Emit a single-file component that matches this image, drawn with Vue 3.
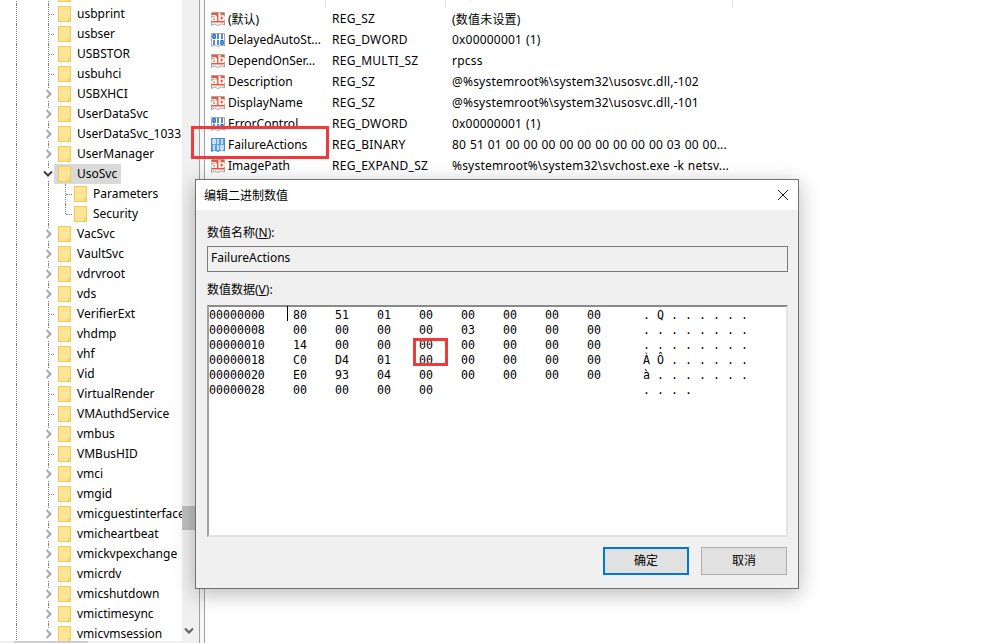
<script setup>
const treeRows = [
  { name: '', kind: 'leaf' },
  { name: 'usbprint', kind: 'leaf' },
  { name: 'usbser', kind: 'leaf' },
  { name: 'USBSTOR', kind: 'leaf' },
  { name: 'usbuhci', kind: 'leaf' },
  { name: 'USBXHCI', kind: 'closed' },
  { name: 'UserDataSvc', kind: 'closed' },
  { name: 'UserDataSvc_1033', kind: 'closed' },
  { name: 'UserManager', kind: 'closed' },
  { name: 'UsoSvc', kind: 'open' },
  { name: 'Parameters', kind: 'child' },
  { name: 'Security', kind: 'lastchild' },
  { name: 'VacSvc', kind: 'closed' },
  { name: 'VaultSvc', kind: 'closed' },
  { name: 'vdrvroot', kind: 'closed' },
  { name: 'vds', kind: 'closed' },
  { name: 'VerifierExt', kind: 'leaf' },
  { name: 'vhdmp', kind: 'closed' },
  { name: 'vhf', kind: 'leaf' },
  { name: 'Vid', kind: 'closed' },
  { name: 'VirtualRender', kind: 'leaf' },
  { name: 'VMAuthdService', kind: 'leaf' },
  { name: 'vmbus', kind: 'closed' },
  { name: 'VMBusHID', kind: 'leaf' },
  { name: 'vmci', kind: 'closed' },
  { name: 'vmgid', kind: 'leaf' },
  { name: 'vmicguestinterface', kind: 'closed' },
  { name: 'vmicheartbeat', kind: 'closed' },
  { name: 'vmickvpexchange', kind: 'closed' },
  { name: 'vmicrdv', kind: 'closed' },
  { name: 'vmicshutdown', kind: 'closed' },
  { name: 'vmictimesync', kind: 'closed' },
  { name: 'vmicvmsession', kind: 'closed' },
]

const values = [
  { icon: 'ab', name: '(默认)', type: 'REG_SZ', data: '(数值未设置)' },
  { icon: 'bin', name: 'DelayedAutoSt...', type: 'REG_DWORD', data: '0x00000001 (1)' },
  { icon: 'ab', name: 'DependOnSer...', type: 'REG_MULTI_SZ', data: 'rpcss' },
  { icon: 'ab', name: 'Description', type: 'REG_SZ', data: '@%systemroot%\\system32\\usosvc.dll,-102' },
  { icon: 'ab', name: 'DisplayName', type: 'REG_SZ', data: '@%systemroot%\\system32\\usosvc.dll,-101' },
  { icon: 'bin', name: 'ErrorControl', type: 'REG_DWORD', data: '0x00000001 (1)' },
  { icon: 'bin', name: 'FailureActions', type: 'REG_BINARY', data: '80 51 01 00 00 00 00 00 00 00 00 00 03 00 00...', selected: true },
  { icon: 'ab', name: 'ImagePath', type: 'REG_EXPAND_SZ', data: '%systemroot%\\system32\\svchost.exe -k netsv...' },
]

const hexRows = [
  { off: '00000000', bytes: ['80', '51', '01', '00', '00', '00', '00', '00'], ascii: ['.', 'Q', '.', '.', '.', '.', '.', '.'] },
  { off: '00000008', bytes: ['00', '00', '00', '00', '03', '00', '00', '00'], ascii: ['.', '.', '.', '.', '.', '.', '.', '.'] },
  { off: '00000010', bytes: ['14', '00', '00', '00', '00', '00', '00', '00'], ascii: ['.', '.', '.', '.', '.', '.', '.', '.'] },
  { off: '00000018', bytes: ['C0', 'D4', '01', '00', '00', '00', '00', '00'], ascii: ['À', 'Ô', '.', '.', '.', '.', '.', '.'] },
  { off: '00000020', bytes: ['E0', '93', '04', '00', '00', '00', '00', '00'], ascii: ['à', '.', '.', '.', '.', '.', '.', '.'] },
  { off: '00000028', bytes: ['00', '00', '00', '00', '', '', '', ''], ascii: ['.', '.', '.', '.', '', '', '', ''] },
]
</script>

<template>
  <div class="screen">
    <div class="tree">
      <div class="tree-rows">
        <div v-for="(row, i) in treeRows" :key="i" class="tree-row">
          <span class="guide-a"></span>
          <span class="guide-b"></span>
          <template v-if="row.kind === 'child' || row.kind === 'lastchild'">
            <span class="guide-c" :class="{ half: row.kind === 'lastchild' }"></span>
            <span class="stub child-stub"></span>
          </template>
          <span v-else class="stub" :class="{ hidden: row.kind !== 'leaf' }"></span>
          <span v-if="row.kind === 'closed'" class="chev">
            <svg width="8" height="10" viewBox="0 0 8 10"><path d="M1.5 1 5.5 5 1.5 9" fill="none" stroke="#a8a8a8" stroke-width="2" /></svg>
          </span>
          <span v-if="row.kind === 'open'" class="chev chev-open">
            <svg width="10" height="8" viewBox="0 0 10 8"><path d="M1 1.5 5 5.5 9 1.5" fill="none" stroke="#404040" stroke-width="2" /></svg>
          </span>
          <span class="node" :class="{ selected: row.kind === 'open', childnode: row.kind === 'child' || row.kind === 'lastchild' }">
            <svg class="folder" width="13" height="16" viewBox="0 0 13 16">
              <rect x="0.5" y="0.5" width="12" height="15" fill="#fee595" stroke="#eecb57" />
              <path d="M10.5 15.5V12.5H12.5" fill="none" stroke="#eecb57" />
            </svg>
            <span class="node-label">{{ row.name }}</span>
          </span>
        </div>
      </div>
      <div class="hscroll"><span class="hthumb"></span></div>
    </div>

    <div class="vscroll">
      <span class="vthumb"></span>
      <svg class="varrow" width="10" height="8" viewBox="0 0 10 8"><path d="M1 1.5 5 5.5 9 1.5" fill="none" stroke="#606060" stroke-width="2" /></svg>
    </div>
    <div class="splitter"></div>

    <div class="list">
      <div class="list-head">
        <span class="head-cell"><span>名称</span></span>
        <span class="head-cell"><span>类型</span></span>
        <span class="head-cell"><span>数据</span></span>
      </div>
      <div v-for="v in values" :key="v.name" class="list-row">
        <span class="cell-name">
          <svg v-if="v.icon === 'ab'" class="vicon" width="16" height="16" viewBox="0 0 16 16">
            <path d="M1.5 1.5H14.5V14L11.5 12.8 8 14.5 4.5 13 1.5 14.5Z" fill="#fff" stroke="#a5a5a5" />
            <rect x="2" y="2" width="12" height="9.5" fill="#e8583a" />
            <text x="8" y="10.2" text-anchor="middle" class="ab-text">ab</text>
          </svg>
          <svg v-else class="vicon" width="16" height="16" viewBox="0 0 16 16">
            <path d="M1.5 1.5H14.5V14L11.5 12.8 8 14.5 4.5 13 1.5 14.5Z" :fill="v.selected ? '#5aa0e6' : '#fff'" :stroke="v.selected ? '#4a8ed0' : '#a5a5a5'" />
            <g fill="none" :stroke="v.selected ? '#eaf4ff' : '#1b66c9'" stroke-width="1.5">
              <rect x="3" y="2.6" width="2.2" height="4" rx="1" />
              <path d="M8 2V7M12 2V7" />
              <path d="M4 8V13M8 8V13" />
              <rect x="10.9" y="8.4" width="2.2" height="4" rx="1" />
            </g>
          </svg>
          <span>{{ v.name }}</span>
        </span>
        <span class="cell-type">{{ v.type }}</span>
        <span class="cell-data">{{ v.data }}</span>
      </div>
      <span class="red-box name-mark"></span>
    </div>

    <div class="dialog">
      <div class="dialog-title">
        <span>编辑二进制数值</span>
        <svg width="10" height="10" viewBox="0 0 10 10"><path d="M0 0 10 10M10 0 0 10" stroke="#1a1a1a" fill="none" /></svg>
      </div>
      <div class="dialog-body">
        <div class="label first">数值名称(<u>N</u>):</div>
        <div class="name-field">FailureActions</div>
        <div class="label second">数值数据(<u>V</u>):</div>
        <div class="hex-box">
          <span class="caret"></span>
          <span class="red-box hex-mark"></span>
          <div v-for="r in hexRows" :key="r.off" class="hex-row">
            <span class="hex-off">{{ r.off }}</span>
            <span v-for="(b, i) in r.bytes" :key="i" class="hex-byte">{{ b }}</span>
            <span class="hex-gap"></span>
            <span v-for="(c, i) in r.ascii" :key="'a' + i" class="hex-char">{{ c }}</span>
          </div>
        </div>
        <div class="buttons">
          <span class="btn primary">确定</span>
          <span class="btn">取消</span>
        </div>
      </div>
    </div>
  </div>
</template>

<style>
html, body { margin: 0; background: #fff; }
</style>

<style scoped>
.screen {
  position: relative;
  display: flex;
  width: 981px;
  height: 643px;
  overflow: hidden;
  background: #fff;
  color: #000;
  font-family: "Noto Sans", "Noto Sans CJK SC", sans-serif;
  font-size: 12px;
}

/* tree */
.tree {
  position: relative;
  width: 182px;
  height: 643px;
  flex: none;
  overflow: hidden;
}
.tree-rows { margin-top: -16px; }
.tree-row {
  position: relative;
  display: flex;
  align-items: center;
  height: 20px;
  white-space: nowrap;
}
.guide-a, .guide-b, .guide-c {
  align-self: stretch;
  flex: none;
  box-sizing: border-box;
  border-right: 1px dotted #808080;
}
.guide-a { width: 17px; }
.guide-b { width: 32px; }
.guide-c { width: 17px; }
.guide-c.half { align-self: flex-start; height: 10px; }
.stub {
  flex: none;
  width: 5px;
  height: 0;
  border-top: 1px dotted #808080;
}
.stub.hidden { border-top-color: transparent; }
.child-stub { width: 6px; }
.chev {
  position: absolute;
  left: 44px;
  top: 4px;
  display: flex;
  align-items: center;
  justify-content: center;
  width: 9px;
  height: 12px;
  background: #fff;
}
.chev-open { left: 43px; width: 10px; }
.node {
  display: flex;
  align-items: center;
  height: 20px;
  padding: 0 4px;
}
.node.childnode { padding-left: 2px; }
.node.selected { background: #d9d9d9; }
.folder { flex: none; margin-right: 6px; }
.node-label { line-height: 20px; }
.hscroll {
  position: absolute;
  left: 0;
  right: 0;
  bottom: 0;
  height: 2px;
  background: #f0f0f0;
}
.hthumb {
  display: block;
  width: 74px;
  height: 2px;
  margin-left: 14px;
  background: #cdcdcd;
}
.vscroll {
  position: relative;
  flex: none;
  width: 17px;
  height: 643px;
  background: #f0f0f0;
}
.vthumb {
  position: absolute;
  left: 0;
  top: 506px;
  width: 14px;
  height: 24px;
  background: #c0c0c0;
}
.varrow { position: absolute; left: 2px; top: 627px; }
.splitter {
  flex: none;
  width: 4px;
  height: 643px;
  border-left: 1px solid #a0a0a0;
  border-right: 1px solid #a0a0a0;
  background: #f7f7f7;
}

/* list */
.list {
  position: relative;
  flex: none;
  width: 528px;
}
.list-head {
  display: grid;
  grid-template-columns: 121px 120px 287px;
  height: 8px;
  overflow: hidden;
}
.head-cell {
  display: block;
  box-sizing: border-box;
  height: 8px;
  padding-left: 6px;
  border-right: 1px solid #e5e5e5;
  color: #333;
}
.head-cell:first-child { padding-left: 23px; }
.head-cell span { display: block; margin-top: -13px; line-height: 16px; }
.list-row {
  display: grid;
  grid-template-columns: 121px 120px 287px;
  align-items: center;
  height: 21px;
  white-space: nowrap;
}
.cell-name {
  display: flex;
  align-items: center;
  padding-left: 5px;
}
.vicon { flex: none; margin-right: 2px; }
.ab-text {
  font-family: "DejaVu Sans", sans-serif;
  font-size: 10.5px;
  font-weight: 700;
  fill: #fff;
}
.cell-type { padding-left: 6px; letter-spacing: 0.25px; }
.cell-data { padding-left: 6px; letter-spacing: 0.2px; word-spacing: 0.45px; }
.red-box {
  position: absolute;
  box-sizing: border-box;
  border: 3px solid #f0393b;
  pointer-events: none;
}
.name-mark {
  left: -14px;
  top: 126px;
  width: 138px;
  height: 33px;
}

/* dialog */
.dialog {
  position: absolute;
  left: 195px;
  top: 179px;
  box-sizing: border-box;
  width: 604px;
  height: 410px;
  border: 1px solid #707070;
  background: #f0f0f0;
  box-shadow: 0 5px 20px rgba(0, 0, 0, 0.28);
  display: flex;
  flex-direction: column;
}
.dialog-title {
  display: flex;
  align-items: center;
  justify-content: space-between;
  height: 30px;
  padding: 0 10px 0 8px;
  flex: none;
  background: #fff;
}
.dialog-body {
  position: relative;
  flex: 1;
  padding: 0 10px 0 11px;
}
.label { line-height: 16px; }
.label.first { padding-top: 15px; }
.label.second { padding-top: 10px; }
.name-field {
  box-sizing: border-box;
  height: 26px;
  margin-top: 5px;
  padding-left: 3px;
  border: 1px solid #7a7a7a;
  line-height: 22px;
  background: #f0f0f0;
}
.hex-box {
  position: relative;
  box-sizing: border-box;
  height: 232px;
  margin-top: 7px;
  padding-top: 1px;
  border: 2px solid;
  border-color: #8a8a8a #e3e3e3 #e3e3e3 #a0a0a0;
  background: #fff;
  font-family: "DejaVu Sans Mono", monospace;
  font-size: 11.6px;
  color: #000;
}
.hex-row {
  display: flex;
  height: 15px;
  line-height: 15px;
}
.hex-off { flex: none; width: 84px; }
.hex-byte { flex: none; width: 42px; }
.hex-gap { flex: none; width: 14px; }
.hex-char { flex: none; width: 14px; }
.caret {
  position: absolute;
  left: 78px;
  top: -1px;
  width: 1px;
  height: 15px;
  background: #000;
}
.hex-mark {
  left: 204px;
  top: 31px;
  width: 35px;
  height: 28px;
  z-index: 1;
}
.buttons {
  display: flex;
  justify-content: flex-end;
  gap: 12px;
  margin-top: 10px;
  margin-right: 1px;
}
.btn {
  box-sizing: border-box;
  width: 86px;
  height: 28px;
  border: 1px solid #adadad;
  background: #e1e1e1;
  text-align: center;
  line-height: 26px;
}
.btn.primary {
  border: 2px solid #0078d7;
  line-height: 24px;
}
</style>
